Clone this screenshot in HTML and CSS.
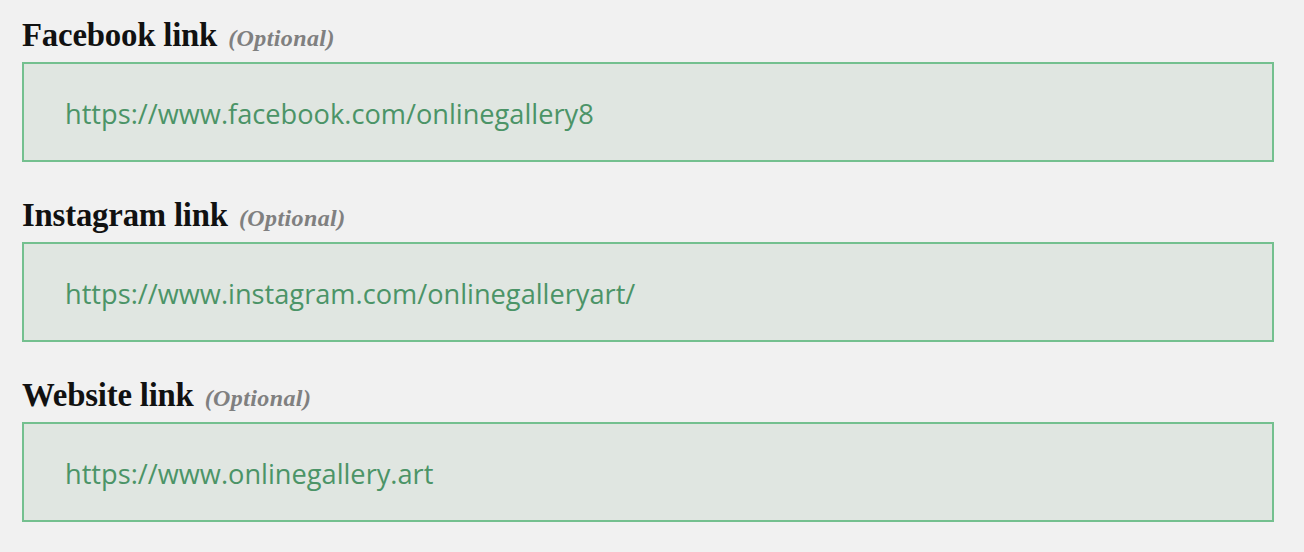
FILE: index.html
```html
<!DOCTYPE html>
<html lang="en">

<head>
  <meta charset="UTF-8">
  <meta name="viewport" content="width=device-width, initial-scale=1.0">
  <title>Social links</title>
  <link rel="stylesheet" href="styles.css">
</head>

<body>
  <form class="links-form">
    <div class="field">
      <label for="facebookLink">Facebook link <span class="optional">(Optional)</span></label>
      <input type="url" id="facebookLink" value="https://www.facebook.com/onlinegallery8">
    </div>
    <div class="field">
      <label for="instagramLink">Instagram link <span class="optional">(Optional)</span></label>
      <input type="url" id="instagramLink" value="https://www.instagram.com/onlinegalleryart/">
    </div>
    <div class="field">
      <label for="websiteLink">Website link <span class="optional">(Optional)</span></label>
      <input type="url" id="websiteLink" value="https://www.onlinegallery.art">
    </div>
  </form>
</body>

</html>
```

FILE: styles.css
```css
* {
  box-sizing: border-box;
}

body {
  margin: 0;
  background-color: #f1f1f1;
  color: #111111;
}

.links-form {
  padding: 16px 30px 0 22px;
}

.field {
  margin-bottom: 34px;
}

.field label {
  display: block;
  height: 40px;
  font-family: "Liberation Serif", serif;
  font-weight: bold;
  font-size: 32.8px;
  line-height: 38px;
  margin-bottom: 6px;
  letter-spacing: -0.2px;
}

.field .optional {
  font-style: italic;
  font-size: 24px;
  line-height: 1;
  color: #808080;
  letter-spacing: 0.4px;
  margin-left: 3px;
}

.field input {
  display: block;
  width: 100%;
  height: 100px;
  padding: 2px 0 0 41px;
  border: 2px solid #74c08f;
  background-color: #e0e6e1;
  color: #4b9467;
  font-family: "Open Sans", sans-serif;
  font-size: 27.2px;
  outline: none;
}
```
